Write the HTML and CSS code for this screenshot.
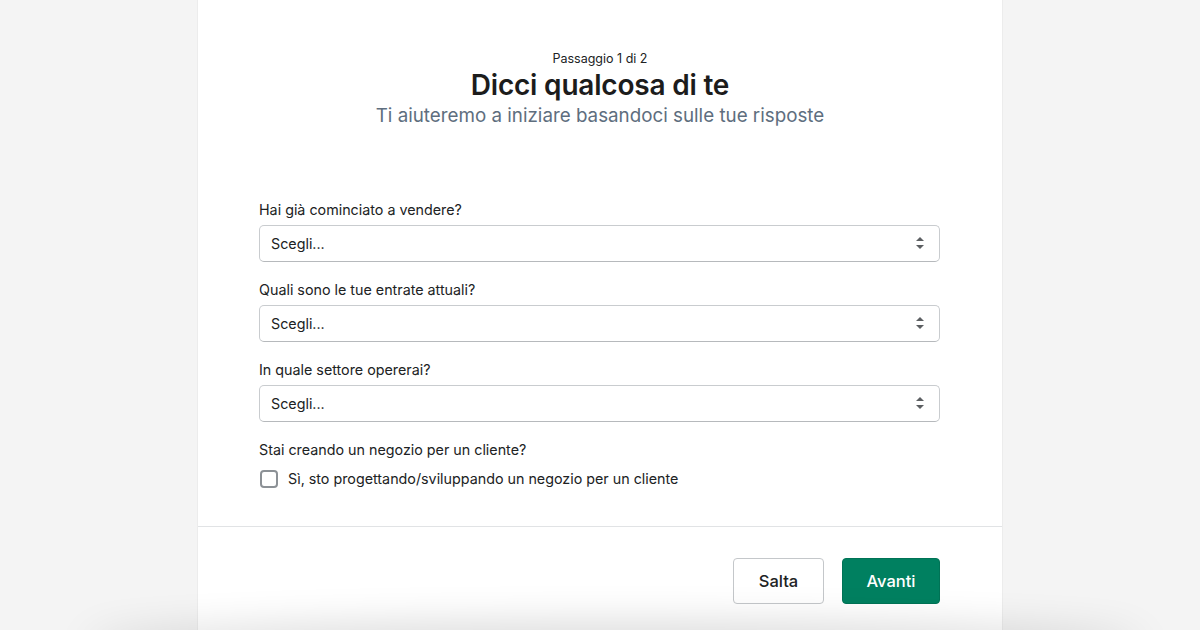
FILE: index.html
```html
<!DOCTYPE html>
<html lang="it">
<head>
<meta charset="utf-8">
<title>Dicci qualcosa di te</title>
<link rel="stylesheet" href="styles.css">
</head>
<body>
<main class="card">
  <header class="intro">
    <p class="step">Passaggio 1 di 2</p>
    <h1 class="title">Dicci qualcosa di te</h1>
    <p class="subtitle">Ti aiuteremo a iniziare basandoci sulle tue risposte</p>
  </header>
  <form class="form">
    <div class="field">
      <label class="label" for="q1">Hai già cominciato a vendere?</label>
      <div class="select-wrap">
        <select id="q1" class="select"><option>Scegli...</option></select>
        <svg class="select-icon" viewBox="0 0 20 20" width="20" height="20"><path d="M10 16l-4-4h8l-4 4zm0-12l4 4H6l4-4z"/></svg>
      </div>
    </div>
    <div class="field">
      <label class="label" for="q2">Quali sono le tue entrate attuali?</label>
      <div class="select-wrap">
        <select id="q2" class="select"><option>Scegli...</option></select>
        <svg class="select-icon" viewBox="0 0 20 20" width="20" height="20"><path d="M10 16l-4-4h8l-4 4zm0-12l4 4H6l4-4z"/></svg>
      </div>
    </div>
    <div class="field">
      <label class="label" for="q3">In quale settore opererai?</label>
      <div class="select-wrap">
        <select id="q3" class="select"><option>Scegli...</option></select>
        <svg class="select-icon" viewBox="0 0 20 20" width="20" height="20"><path d="M10 16l-4-4h8l-4 4zm0-12l4 4H6l4-4z"/></svg>
      </div>
    </div>
    <div class="field field-check">
      <p class="label">Stai creando un negozio per un cliente?</p>
      <label class="check">
        <input type="checkbox" class="checkbox">
        <span>Sì, sto progettando/sviluppando un negozio per un cliente</span>
      </label>
    </div>
  </form>
  <footer class="actions">
    <button type="button" class="btn btn-secondary">Salta</button>
    <button type="button" class="btn btn-primary">Avanti</button>
  </footer>
</main>
</body>
</html>
```

FILE: styles.css
```css
* { box-sizing: border-box; }

html, body {
  margin: 0;
  height: 630px;
  overflow: hidden;
}

body {
  background: #f4f4f4;
  font-family: Inter, "Noto Sans", "Liberation Sans", sans-serif;
  color: #202223;
}

body::after {
  content: "";
  position: fixed;
  left: 90px;
  right: 60px;
  bottom: -30px;
  height: 30px;
  box-shadow: 0 0 40px 6px rgba(0, 0, 0, 0.16);
  border-radius: 50%;
  pointer-events: none;
}

.card {
  width: 806px;
  margin: 0 auto;
  min-height: 630px;
  background: #fff;
  border-left: 1px solid #ececec;
  border-right: 1px solid #ececec;
}

.intro {
  text-align: center;
  padding-top: 51px;
}

.step {
  margin: 0;
  font-size: 12.5px;
  line-height: 16px;
  color: #202223;
}

.title {
  margin: 1px 0 0;
  font-size: 28px;
  line-height: 34px;
  font-weight: 600;
  letter-spacing: -0.2px;
  color: #1c1c1c;
}

.subtitle {
  margin: 1px 0 0;
  font-size: 18.8px;
  line-height: 26px;
  color: #5e6e7e;
}

.form {
  padding: 71px 62px 0 61px;
  display: flex;
  flex-direction: column;
  gap: 18px;
}

.field {
  display: flex;
  flex-direction: column;
  gap: 5px;
}

.label {
  margin: 0;
  font-size: 14.3px;
  line-height: 20px;
  color: #202223;
}

.select-wrap {
  position: relative;
}

.select {
  display: block;
  width: 100%;
  height: 37px;
  appearance: none;
  -webkit-appearance: none;
  background: #fff;
  border: 1px solid #c9cccf;
  border-bottom-color: #b6b9bc;
  border-radius: 5px;
  padding: 0 40px 0 11px;
  font-family: inherit;
  font-size: 14.3px;
  color: #202223;
}

.select-icon {
  position: absolute;
  right: 10px;
  top: 8px;
  fill: #5c5f62;
}

.field-check {
  gap: 9px;
}

.check {
  display: flex;
  align-items: center;
  gap: 10px;
  font-size: 14.3px;
  line-height: 20px;
  color: #202223;
}

.checkbox {
  appearance: none;
  -webkit-appearance: none;
  margin: 0 0 0 1px;
  width: 18px;
  height: 18px;
  border: 2px solid #8c9196;
  border-radius: 4px;
  background: #fff;
}

.actions {
  margin-top: 37px;
  border-top: 1px solid #e1e3e5;
  padding: 31px 62px 0;
  display: flex;
  justify-content: flex-end;
  gap: 18px;
}

.btn {
  height: 46px;
  border-radius: 4px;
  font-family: inherit;
  font-size: 16.5px;
  font-weight: 500;
  padding: 0 20px;
}

.btn-secondary {
  background: #fff;
  border: 1px solid #c4c7ca;
  color: #202223;
  width: 91px;
}

.btn-primary {
  background: #008060;
  border: 1px solid #007356;
  color: #fff;
  width: 98px;
}
```
